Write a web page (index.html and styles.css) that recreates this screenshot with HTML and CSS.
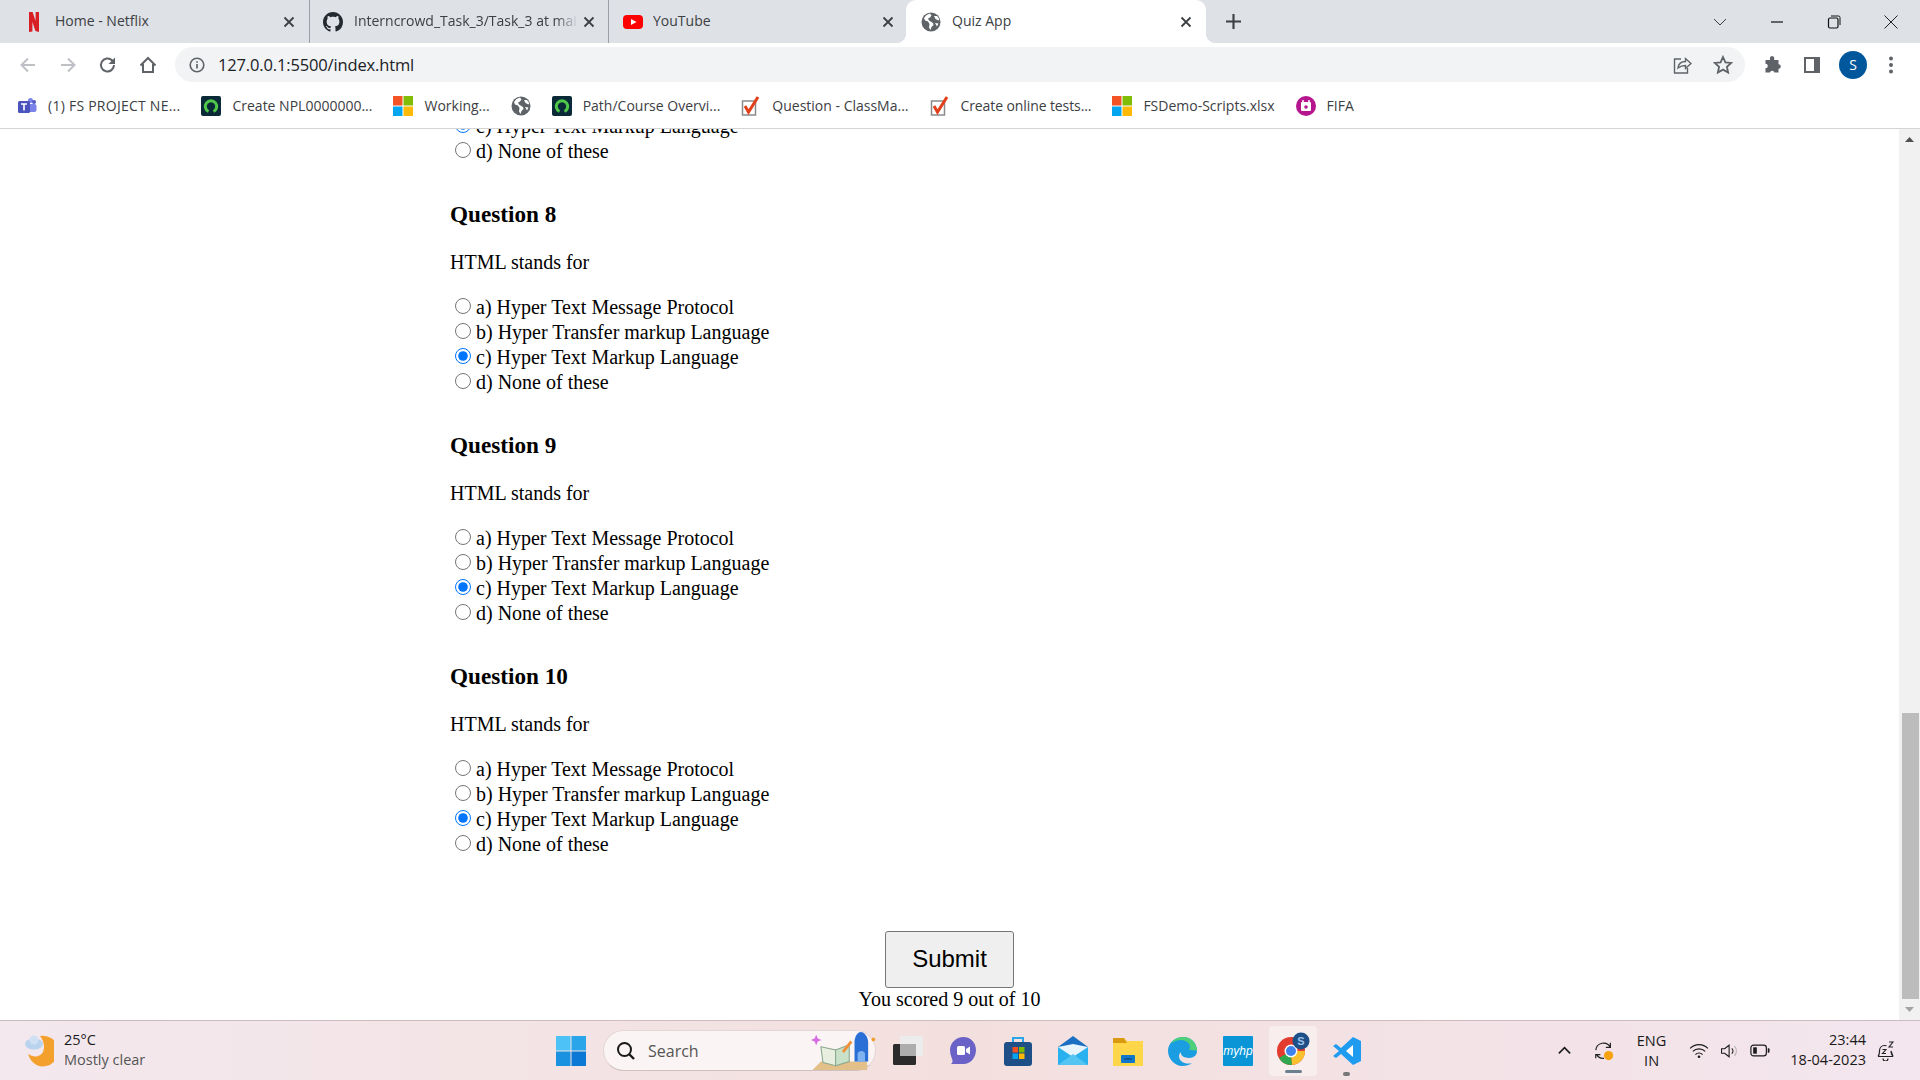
FILE: index.html
```html
<!DOCTYPE html>
<html lang="en">
<head>
  <meta charset="UTF-8" />
  <meta name="viewport" content="width=device-width, initial-scale=1.0" />
  <title>Quiz App</title>
  <link rel="stylesheet" href="styles.css">
</head>
<body>
  <svg class="defs" width="0" height="0">
    <symbol id="globe" viewBox="0 0 20 20">
      <circle cx="10" cy="10" r="9.5" fill="#5f6368"/>
      <path d="M9 1.500 5.500 3 3 6l1 2.500 3 1 1.500 2.500-.5 3.500 1.500 2.500 1-3 2-2-.5-2L8 8.500 7 6.500l2-1 1.500-2zM13 4l1.500 3 3 1.500.8-1.500L16 4zM14 11l2 3.500 1.500-3z" fill="#fff"/>
    </symbol>
    <symbol id="ms" viewBox="0 0 20 20">
      <rect width="9.500" height="9.500" fill="#f35325"/>
      <rect x="10.500" width="9.500" height="9.500" fill="#81bc06"/>
      <rect y="10.500" width="9.500" height="9.500" fill="#05a6f0"/>
      <rect x="10.500" y="10.500" width="9.500" height="9.500" fill="#ffba08"/>
    </symbol>
    <symbol id="ring" viewBox="0 0 20 20">
      <rect width="20" height="20" rx="2" fill="#0b2a38"/>
      <path d="M7.500 15.500a5.700 5.700 0 1 1 5 0" fill="none" stroke="#4fc748" stroke-width="3"/>
    </symbol>
    <symbol id="check" viewBox="0 0 20 20">
      <rect x="1.500" y="5" width="13" height="14" fill="#fff" stroke="#8a8a8a" stroke-width="1.500"/>
      <path d="M4 10l3.500 6L17 1" fill="none" stroke="#e2401b" stroke-width="3"/>
    </symbol>
    <symbol id="close" viewBox="0 0 12 12">
      <path d="M1.500 1.500l9 9m0-9l-9 9" stroke="#3c4043" stroke-width="1.800" fill="none"/>
    </symbol>
  </svg>

  <header class="chrome">
    <div class="tabstrip">
      <div class="tab tab-home">
        <svg class="favicon" viewBox="0 0 20 20"><path d="M5 0h3.600l3 9V0H15v20l-3.600-1L8.400 10v9.500L5 20z" fill="#d81f26"/></svg>
        <span class="tab-title">Home - Netflix</span>
        <svg class="tab-close"><use href="#close"/></svg>
      </div>
      <div class="tab tab-repo">
        <svg class="favicon" viewBox="0 0 16 16"><path fill="#24292f" d="M8 0C3.580 0 0 3.580 0 8c0 3.540 2.290 6.530 5.470 7.590.4.070.55-.17.55-.38 0-.19-.01-.82-.01-1.490-2.010.37-2.530-.49-2.690-.94-.09-.23-.48-.94-.82-1.130-.28-.15-.68-.52-.01-.53.63-.01 1.080.58 1.230.82.72 1.210 1.870.87 2.330.66.07-.52.28-.87.51-1.070-1.780-.2-3.640-.89-3.640-3.950 0-.87.31-1.590.82-2.150-.08-.2-.36-1.020.08-2.120 0 0 .67-.21 2.200.82.64-.18 1.320-.27 2-.27.68 0 1.360.09 2 .27 1.530-1.040 2.200-.82 2.200-.82.44 1.100.16 1.920.08 2.120.51.56.82 1.270.82 2.150 0 3.070-1.870 3.750-3.650 3.950.29.25.54.73.54 1.480 0 1.070-.01 1.930-.01 2.200 0 .21.15.46.55.38A8.013 8.013 0 0016 8c0-4.420-3.580-8-8-8z"/></svg>
        <span class="tab-title tab-title-fade">Interncrowd_Task_3/Task_3 at main</span>
        <svg class="tab-close"><use href="#close"/></svg>
      </div>
      <div class="tab tab-last">
        <svg class="favicon" viewBox="0 0 20 20"><rect y="3" width="20" height="14" rx="4" fill="#f00"/><path d="M8 7l5.500 3L8 13z" fill="#fff"/></svg>
        <span class="tab-title">YouTube</span>
        <svg class="tab-close"><use href="#close"/></svg>
      </div>
      <div class="tab tab-active">
        <svg class="favicon"><use href="#globe"/></svg>
        <span class="tab-title">Quiz App</span>
        <svg class="tab-close"><use href="#close"/></svg>
      </div>
      <svg class="new-tab" viewBox="0 0 14 14"><path d="M7 0v14M0 7h14" stroke="#3c4043" stroke-width="2"/></svg>
      <div class="window-controls">
        <svg class="win-btn" viewBox="0 0 14 14"><path d="M1 4l6 6 6-6" fill="none" stroke="#3c4043"/></svg>
        <svg class="win-btn" viewBox="0 0 14 14"><path d="M1 7h12" stroke="#111" stroke-width="1.200"/></svg>
        <svg class="win-btn" viewBox="0 0 14 14"><rect x="1.500" y="3" width="9.500" height="10" rx="1.500" fill="none" stroke="#111" stroke-width="1.200"/><path d="M4 1h7.500a1.500 1.500 0 0 1 1.500 1.500V10" fill="none" stroke="#111"/></svg>
        <svg class="win-btn" viewBox="0 0 14 14"><path d="M.5.500l13 13m0-13l-13 13" stroke="#222" stroke-width="1"/></svg>
      </div>
    </div>

    <div class="toolbar">
      <svg class="tool" viewBox="0 0 20 20"><path d="M17 10H4m6-6.500L3.500 10l6.500 6.500" fill="none" stroke="#bdc1c6" stroke-width="2"/></svg>
      <svg class="tool" viewBox="0 0 20 20"><path d="M3 10h13m-6-6.500l6.500 6.500-6.500 6.500" fill="none" stroke="#bdc1c6" stroke-width="2"/></svg>
      <svg class="tool" viewBox="0 0 20 20"><path d="M16 10a6.500 6.500 0 1 1-2-4.700L16 7.500" fill="none" stroke="#5f6368" stroke-width="2"/><path d="M17 2.500V9h-6.500z" fill="#5f6368"/></svg>
      <svg class="tool" viewBox="0 0 20 20"><path d="M2.500 10.500 10 3l7.500 7.500M5 9v8h10V9" fill="none" stroke="#5f6368" stroke-width="2"/></svg>
      <div class="omnibox">
        <svg class="omni-info" viewBox="0 0 16 16"><circle cx="8" cy="8" r="6.800" fill="none" stroke="#5f6368" stroke-width="1.600"/><path d="M8 7v4.500M8 4.300v1.500" stroke="#5f6368" stroke-width="1.700"/></svg>
        <span class="omni-url">127.0.0.1:5500/index.html</span>
        <svg class="omni-icon" viewBox="0 0 20 20"><path d="M9 4H2.500v14h13v-5" fill="none" stroke="#5f6368" stroke-width="1.400"/><path d="M6 13c.5-4 3.500-6.500 7.500-6.500V3.500L19 8.500l-5.500 5v-3C10 10.500 8 11.500 6 13z" fill="none" stroke="#5f6368" stroke-width="1.400"/></svg>
        <svg class="omni-icon" viewBox="0 0 20 20"><path d="M10 2l2.400 5.300 5.800.6-4.300 3.900 1.200 5.700-5.100-2.900-5.100 2.900 1.200-5.700L1.800 7.900l5.800-.6z" fill="none" stroke="#5f6368" stroke-width="1.800"/></svg>
      </div>
      <svg class="tool" viewBox="0 0 20 20"><path d="M8 2.500a2.200 2.200 0 0 1 4.200 0V5h4.300v4.200a2.300 2.300 0 1 1 0 4.600v3.700h-4a2.400 2.400 0 0 0-4.600 0H3.500v-4.200a2.300 2.300 0 1 0 0-4.600V5H8z" fill="#5f6368"/></svg>
      <svg class="tool" viewBox="0 0 20 20"><rect x="2" y="2" width="16" height="16" fill="#5f6368"/><rect x="4" y="4" width="8" height="12" fill="#fff"/></svg>
      <span class="avatar">S</span>
      <svg class="tool tool-dots" viewBox="0 0 20 20"><circle cx="10" cy="3.500" r="2" fill="#5f6368"/><circle cx="10" cy="10" r="2" fill="#5f6368"/><circle cx="10" cy="16.500" r="2" fill="#5f6368"/></svg>
    </div>

    <nav class="bookmarks">
      <a class="bookmark bookmark-wide">
        <svg class="bm-icon" viewBox="0 0 20 20"><circle cx="13.500" cy="4.500" r="2.500" fill="#7b83eb"/><circle cx="17" cy="6" r="2" fill="#5059c9"/><rect x="11" y="8" width="8.500" height="8" rx="2" fill="#7b83eb"/><rect x="1" y="5" width="12" height="12" rx="1.500" fill="#4b53bc"/><path d="M4 8h6M7 8v6.500" stroke="#fff" stroke-width="1.600"/></svg>
        (1) FS PROJECT NE...
      </a>
      <a class="bookmark"><svg class="bm-icon"><use href="#ring"/></svg>Create NPL0000000...</a>
      <a class="bookmark"><svg class="bm-icon"><use href="#ms"/></svg>Working...</a>
      <a class="bookmark"><svg class="bm-icon bm-icon-only"><use href="#globe"/></svg></a>
      <a class="bookmark"><svg class="bm-icon"><use href="#ring"/></svg>Path/Course Overvi...</a>
      <a class="bookmark"><svg class="bm-icon"><use href="#check"/></svg>Question - ClassMa...</a>
      <a class="bookmark bookmark-tight"><svg class="bm-icon"><use href="#check"/></svg>Create online tests...</a>
      <a class="bookmark"><svg class="bm-icon"><use href="#ms"/></svg>FSDemo-Scripts.xlsx</a>
      <a class="bookmark">
        <svg class="bm-icon" viewBox="0 0 20 20"><circle cx="10" cy="10" r="10" fill="#b5158d"/><rect x="5" y="6" width="10" height="9" rx="1" fill="#fff"/><path d="M7 4v3M13 4v3" stroke="#fff" stroke-width="1.500"/><circle cx="10" cy="11" r="1.800" fill="#b5158d"/></svg>
        FIFA
      </a>
    </nav>
  </header>

  <div class="viewport">
    <main class="page">
      <div class="quiz">
        <div class="options options-clipped">
          <label class="option"><input type="radio" name="q7" checked>c) Hyper Text Markup Language</label>
          <label class="option"><input type="radio" name="q7">d) None of these</label>
        </div>

        <section class="question">
          <h3>Question 8</h3>
          <p>HTML stands for</p>
          <div class="options">
            <label class="option"><input type="radio" name="q8">a) Hyper Text Message Protocol</label>
            <label class="option"><input type="radio" name="q8">b) Hyper Transfer markup Language</label>
            <label class="option"><input type="radio" name="q8" checked>c) Hyper Text Markup Language</label>
            <label class="option"><input type="radio" name="q8">d) None of these</label>
          </div>
        </section>

        <section class="question">
          <h3>Question 9</h3>
          <p>HTML stands for</p>
          <div class="options">
            <label class="option"><input type="radio" name="q9">a) Hyper Text Message Protocol</label>
            <label class="option"><input type="radio" name="q9">b) Hyper Transfer markup Language</label>
            <label class="option"><input type="radio" name="q9" checked>c) Hyper Text Markup Language</label>
            <label class="option"><input type="radio" name="q9">d) None of these</label>
          </div>
        </section>

        <section class="question">
          <h3>Question 10</h3>
          <p>HTML stands for</p>
          <div class="options">
            <label class="option"><input type="radio" name="q10">a) Hyper Text Message Protocol</label>
            <label class="option"><input type="radio" name="q10">b) Hyper Transfer markup Language</label>
            <label class="option"><input type="radio" name="q10" checked>c) Hyper Text Markup Language</label>
            <label class="option"><input type="radio" name="q10">d) None of these</label>
          </div>
        </section>
      </div>

      <div class="result">
        <button class="submit" type="button">Submit</button>
        <div class="score">You scored 9 out of 10</div>
      </div>
    </main>

    <div class="scrollbar">
      <svg class="scroll-arrow" viewBox="0 0 21 21"><path d="M6 13l4.500-5 4.500 5z" fill="#505050"/></svg>
      <div class="scroll-track"><div class="scroll-thumb"></div></div>
      <svg class="scroll-arrow" viewBox="0 0 21 21"><path d="M6 8l4.500 5 4.500-5z" fill="#a3a3a3"/></svg>
    </div>
  </div>

  <footer class="taskbar">
    <div class="weather">
      <svg class="weather-icon" viewBox="0 0 30 34">
        <path d="M16 2a15 15 0 0 1 6 30C14 34 7 29 4 20c6 4 12 3 15-2 2-5 1-11-3-16z" fill="#f3a02c"/>
        <ellipse cx="10" cy="10" rx="9" ry="5.500" fill="#b9d3ee"/>
        <circle cx="10" cy="6" r="4.500" fill="#cfe0f2"/>
      </svg>
      <div class="weather-text">
        <div class="weather-temp">25°C</div>
        <div class="weather-desc">Mostly clear</div>
      </div>
    </div>

    <div class="task-center">
      <svg class="task-icon start-icon" viewBox="0 0 30 30">
        <rect width="14.500" height="14.500" fill="#4cc2f7"/><rect x="15.500" width="14.500" height="14.500" fill="#2aa5ea"/>
        <rect y="15.500" width="14.500" height="14.500" fill="#1a92e0"/><rect x="15.500" y="15.500" width="14.500" height="14.500" fill="#0a78d4"/>
      </svg>
      <div class="search-box">
        <svg class="search-glass" viewBox="0 0 20 20"><circle cx="8.500" cy="8.500" r="6.500" fill="none" stroke="#1a1a1a" stroke-width="2"/><path d="M13 13l5 5" stroke="#1a1a1a" stroke-width="2.400"/></svg>
        <span class="search-text">Search</span>
        <svg class="search-art" viewBox="0 0 64 40">
          <path d="M2 38l8-8h44v8z" fill="#e3bf8a"/>
          <path d="M10 16l14 3 0 15-12-3z" fill="#e9efe0" stroke="#8aa88e"/>
          <path d="M24 19l13-5v16l-13 4z" fill="#c9e0c9" stroke="#8aa88e"/>
          <path d="M30 20l8-10 2 2-8 10z" fill="#f0913a"/>
          <path d="M42 30V12c0-6 3-10 6-10s7 4 7 10v18z" fill="#2a6fd6"/>
          <path d="M45 30v-8a4 4 0 0 1 7 0v8z" fill="#7fb2f0"/>
          <path d="M4 8l1.500-3.500L7 8l3.500 1.500L7 11l-1.500 3.500L4 11 .5 9.500z" fill="#d66ae0"/>
          <circle cx="60" cy="9" r="1.800" fill="#f0a030"/>
        </svg>
      </div>
      <svg class="task-icon" viewBox="0 0 30 30"><rect x="0" y="8" width="23" height="21" rx="1.500" fill="#2b2b2b"/><rect x="7" y="0" width="23" height="20" rx="1.500" fill="#ececec"/><rect x="7" y="8" width="16" height="12" fill="#adadad"/></svg>
      <svg class="task-icon" viewBox="0 0 30 30"><path d="M15.500 1C23 1 28 7 28 14s-5 14-12.500 14H3c2.500-2 1.500-4 .5-6.500C2.500 19 2 16.500 2 14 2 7 8 1 15.500 1z" fill="#6a62c7"/><rect x="9" y="10" width="8" height="9" rx="1.500" fill="#fff"/><path d="M18 13l4-2.500v8L18 16z" fill="#fff"/></svg>
      <svg class="task-icon" viewBox="0 0 30 30"><path d="M10 6V2h10v4" fill="none" stroke="#2aa5ea" stroke-width="2"/><rect x="1" y="6" width="28" height="24" rx="3" fill="#1e4f86"/><rect x="9.500" y="11" width="5.500" height="5.500" fill="#f25022"/><rect x="16" y="11" width="5.500" height="5.500" fill="#7fba00"/><rect x="9.500" y="17.500" width="5.500" height="5.500" fill="#00a4ef"/><rect x="16" y="17.500" width="5.500" height="5.500" fill="#ffb900"/></svg>
      <svg class="task-icon" viewBox="0 0 30 30"><path d="M0 11L15 0l15 11v18H0z" fill="#1b6fc2"/><path d="M0 11h30v18H0z" fill="#29b0ef"/><path d="M0 11l15 10 15-10-15-3z" fill="#e7f4fb"/><path d="M0 29l15-11 15 11z" fill="#54c4f2"/></svg>
      <svg class="task-icon" viewBox="0 0 30 30"><path d="M0 2h11l3 3h16v25H0z" fill="#ffd64a"/><path d="M0 2h11l3 5H0z" fill="#d99a12"/><rect x="8" y="19" width="14" height="8" rx="1" fill="#1177c9"/><path d="M11.500 23h7" stroke="#0a4d8c" stroke-width="1.500"/></svg>
      <svg class="task-icon" viewBox="0 0 30 30"><path d="M29 15C29 7 23 1 15 1 7 1 0 7 0 15c0 8 7 15 14 15 4 0 8-1 10-3-6 2-13-1-13-7 0-2 1-3 2-4-1 3 3 6 8 6 5 0 8-3 8-7z" fill="#1b9de2"/><path d="M29 15c0-8-6-14-14-14C10 1 5 3.500 3 7.500 6 5 10 4 13 4c6 0 9 4 9 7 0 1-.5 2-1 2.500 2 1.500 8 .5 8 1.500z" fill="#4ed07a"/></svg>
      <svg class="task-icon" viewBox="0 0 30 30"><rect width="30" height="30" rx="1" fill="#0a96d6"/><text x="15" y="19" class="myhp-text" text-anchor="middle">myhp</text></svg>
      <div class="task-active">
        <svg class="task-icon" viewBox="0 0 34 34">
          <circle cx="15" cy="19" r="14" fill="#e33b2e"/>
          <path d="M15 19L3 26a14 14 0 0 0 13 7z" fill="#2fa84f"/>
          <path d="M15 19l1 14a14 14 0 0 0 13-14z" fill="#fbc02d"/>
          <circle cx="15" cy="19" r="6.500" fill="#fff"/><circle cx="15" cy="19" r="5" fill="#3f83ee"/>
          <circle cx="25" cy="9" r="8.500" fill="#1e4f86"/>
          <text x="25" y="13" class="badge-text" text-anchor="middle">S</text>
        </svg>
        <span class="run-dash"></span>
      </div>
      <div class="task-slot">
        <svg class="task-icon" viewBox="0 0 30 30"><path d="M21 1l8 4v20l-8 4L9 18l-5 4-3-2 6-5-6-5 3-2 5 4z" fill="#1f9cf0"/><path d="M21 9l-7 6 7 6z" fill="#fff"/></svg>
        <span class="run-dot"></span>
      </div>
    </div>

    <div class="tray">
      <svg class="tray-icon tray-chevron" viewBox="0 0 16 16"><path d="M2 11l6-6 6 6" fill="none" stroke="#1a1a1a" stroke-width="1.700"/></svg>
      <svg class="tray-icon tray-sync" viewBox="0 0 24 24"><path d="M3 11a8.500 8.500 0 0 1 16-3M19 3v5h-5M3 20v-4h5M4 16a8 8 0 0 0 8 4" fill="none" stroke="#222" stroke-width="1.300"/><circle cx="17" cy="17" r="5" fill="#f7a20e"/></svg>
      <div class="tray-lang"><div>ENG</div><div>IN</div></div>
      <svg class="tray-icon tray-wifi" viewBox="0 0 22 18"><path d="M1 6a14 14 0 0 1 20 0M4 9.500a10 10 0 0 1 14 0M7 13a5.500 5.500 0 0 1 8 0" fill="none" stroke="#1a1a1a" stroke-width="1.300"/><circle cx="11" cy="15.500" r="1.500" fill="#1a1a1a"/></svg>
      <svg class="tray-icon tray-sound" viewBox="0 0 22 18"><path d="M1.500 6.500h3.500L10 2.500v13l-5-4H1.500z" fill="none" stroke="#1a1a1a" stroke-width="1.200"/><path d="M13 6a4 4 0 0 1 0 6" fill="none" stroke="#1a1a1a" stroke-width="1.200"/><path d="M16 3.500a8 8 0 0 1 0 11" fill="none" stroke="#b5b0b0" stroke-width="1.200"/></svg>
      <svg class="tray-icon tray-battery" viewBox="0 0 22 14"><rect x="1" y="1" width="17" height="12" rx="3" fill="none" stroke="#1a1a1a" stroke-width="1.300"/><rect x="3.500" y="3.500" width="4" height="7" fill="#1a1a1a"/><path d="M19.500 4.500h1a1 1 0 0 1 1 1v3a1 1 0 0 1-1 1h-1z" fill="#1a1a1a"/></svg>
      <div class="tray-clock"><div>23:44</div><div>18-04-2023</div></div>
      <svg class="tray-icon tray-bell" viewBox="0 0 20 20"><path d="M2 15.500c1.500-1.500 1.500-3 1.500-5.500 0-3 2-5.500 5-5.500 1.500 0 2 .3 2 .3M15 10c0 2.500.5 4 2 5.500zM2 15.500h15M7 17.500a2.500 2.500 0 0 0 5 0" fill="none" stroke="#222" stroke-width="1.200"/><path d="M6.500 8.500h3.500l-3.500 4H10M13 1h4l-4 5h4" fill="none" stroke="#222" stroke-width="1.100"/></svg>
    </div>
  </footer>
</body>
</html>
```

FILE: styles.css
```css
* { box-sizing: border-box; }
html, body { width: 100%; height: 100%; margin: 0; overflow: hidden; }
body {
  display: flex; flex-direction: column;
  background: #fff;
  font-family: "Open Sans", "Noto Sans", sans-serif;
  color: #202124;
}
.defs { position: absolute; }

/* browser top */
.chrome { flex: none; }
.tabstrip {
  height: 43px; display: flex; align-items: stretch;
  background: #dee1e6; padding-left: 10px;
}
.tab {
  position: relative; display: flex; align-items: center;
  font-size: 14px;
  border-right: 1px solid #9aa0a6;
  background-clip: content-box;
}
.tab-home { width: 300px; padding: 0 14px; }
.tab-repo { width: 299px; padding: 0 13px; }
.tab-last { width: 297px; padding: 0 12px 0 14px; border-right: none; }
.tab-last .favicon { margin-right: 10px; }
.tab-active {
  width: 300px; background: #fff; border-right: none;
  border-radius: 10px 10px 0 0;
  padding: 0 14px 0 15px;
}
.tab-active::before, .tab-active::after {
  content: ""; position: absolute; bottom: 0; width: 10px; height: 10px;
}
.tab-active::before { left: -10px; background: radial-gradient(circle at 0 0, transparent 10px, #fff 10.5px); }
.tab-active::after { right: -10px; background: radial-gradient(circle at 100% 0, transparent 10px, #fff 10.5px); }
.favicon { width: 20px; height: 20px; flex: none; margin-right: 11px; }
.tab-title { flex: 1; overflow: hidden; white-space: nowrap; color: #3c4043; padding-bottom: 2px; }
.tab-title-fade { -webkit-mask-image: linear-gradient(to right, #000 88%, transparent 98%); mask-image: linear-gradient(to right, #000 88%, transparent 98%); }
.tab-close { width: 12px; height: 12px; flex: none; }
.new-tab { width: 15px; height: 15px; align-self: center; margin-left: 20px; }
.window-controls { margin-left: auto; display: flex; align-items: center; padding-right: 22px; gap: 43px; }
.win-btn { width: 14px; height: 14px; }

.toolbar {
  height: 43px; display: flex; align-items: center; padding: 0 18px;
  background: #fff;
}
.tool { width: 20px; height: 20px; flex: none; margin-right: 20px; }
.omnibox {
  flex: none; width: 1570px; height: 35px; border-radius: 18px;
  display: flex; align-items: center;
  margin-left: -3px; margin-right: 17px;
  background: #f1f3f4; padding: 0 12px 0 14px;
}
.omni-info { width: 16px; height: 16px; flex: none; margin-right: 13px; }
.omni-url { font-size: 16.5px; letter-spacing: -0.15px; color: #202124; flex: 1; white-space: nowrap; }
.omni-icon { width: 20px; height: 20px; flex: none; margin-left: 21px; }
.avatar {
  width: 28px; height: 28px; border-radius: 50%; flex: none;
  background: #01579b; color: #fff; font-size: 14px;
  display: flex; align-items: center; justify-content: center;
  margin-right: 14px; margin-left: -3px;
}
.tool-dots { margin-right: 0; }

.bookmarks {
  height: 43px; display: flex; align-items: center; gap: 21px;
  padding: 0 0 3px 17px; border-bottom: 1px solid #d4d4d4;
  font-size: 14px; color: #3c4043;
}
.bookmark { display: flex; align-items: center; white-space: nowrap; }
.bookmark-wide { letter-spacing: 0.25px; }
.bookmark-tight { letter-spacing: -0.1px; }
.bm-icon { width: 20px; height: 20px; flex: none; margin-right: 11px; }
.bm-icon-only { margin-right: 0; }

/* page */
.viewport { flex: 1; min-height: 0; display: flex; }
.page {
  flex: 1; min-width: 0; overflow: hidden;
  font-family: "Liberation Serif", "Times New Roman", serif;
  font-size: 20px; color: #000;
}
.quiz { padding-left: 450px; }
.options { display: flex; flex-direction: column; }
.options-clipped { margin-top: -15px; }
.option { display: block; height: 25px; line-height: 25px; white-space: nowrap; }
.option input { width: 16px; height: 16px; margin: 0 5px 1px 5px; }
.question { padding-top: 37px; }
.question h3 { margin: 0; font-size: 23.2px; line-height: 27px; font-weight: bold; }
.question p { margin: 23px 0 21px; line-height: 23px; }
.result { margin-top: 74px; text-align: center; }
.submit {
  width: 129px; height: 57px; display: block; margin: 0 auto; padding: 0 0 2px;
  font-family: "Liberation Sans", Arial, sans-serif; font-size: 24px; color: #000;
  background: #efefef; border: 1.5px solid #767676; border-radius: 3px;
}
.score { line-height: 23px; }

.scrollbar { flex: none; width: 21px; display: flex; flex-direction: column; background: #f1f1f1; }
.scroll-arrow { width: 21px; height: 21px; flex: none; }
.scroll-track { flex: 1; display: flex; flex-direction: column; justify-content: flex-end; }
.scroll-thumb { height: 286px; margin: 0 1px 0 3px; background: #bcbcbc; }

/* windows taskbar */
.taskbar {
  flex: none; height: 60px; display: flex; align-items: center;
  border-top: 1px solid #cdbcbf;
  background: linear-gradient(to right, #f3e8ee, #f3e0de 50%, #f3e2e6 75%, #f3e6ee);
  font-size: 14.5px; color: #1a1a1a;
}
.weather { width: 554px; flex: none; display: flex; align-items: center; padding-left: 24px; }
.weather-icon { width: 30px; height: 34px; margin-right: 10px; }
.weather-text { line-height: 20px; padding-bottom: 2px; }
.weather-desc { color: #555; }
.task-center { display: flex; align-items: center; }
.task-icon { width: 30px; height: 30px; flex: none; display: block; }
.start-icon { margin: 0 17px 0 2px; }
.search-box {
  width: 273px; height: 41px; border-radius: 21px; flex: none;
  display: flex; align-items: center; padding-left: 12px;
  background: #faf4f4; border: 1px solid #e4d6d6; border-bottom-color: #d0c0c0;
  margin-right: 17px; font-size: 16px; color: #555;
}
.search-glass { width: 20px; height: 20px; margin-right: 12px; }
.search-text { flex: 1; }
.search-art { width: 70px; height: 42px; margin-right: -4px; }
.task-center > .task-icon:not(.start-icon) { margin-right: 25px; }
.myhp-text { font: italic 12px "Liberation Sans", sans-serif; fill: #fff; }
.badge-text { font: bold 11px "Liberation Sans", sans-serif; fill: #9cc3ec; }
.task-active {
  width: 48px; height: 50px; margin-left: -9px; flex: none; border-radius: 4px;
  background: #f8eeee; display: flex; flex-direction: column; align-items: center;
  padding-top: 6px; gap: 4px;
}
.task-active .task-icon { width: 34px; height: 34px; }
.run-dash { width: 17px; height: 3.5px; border-radius: 2px; background: #6b7f8f; }
.task-slot { width: 30px; margin-left: 15px; position: relative; }
.run-dot { position: absolute; left: 11px; bottom: -10px; width: 7px; height: 4px; border-radius: 2px; background: #777; }

.tray { margin-left: auto; display: flex; align-items: center; padding-right: 34px; }
.tray-icon { display: block; flex: none; }
.tray-chevron { width: 15px; height: 15px; margin-right: 21.5px; }
.tray-sync { width: 22px; height: 22px; margin-right: 21.5px; }
.tray-lang { text-align: center; line-height: 20px; margin-right: 23px; }
.tray-wifi { width: 20px; height: 16px; margin-right: 11px; }
.tray-sound { width: 20px; height: 16px; margin-right: 10px; }
.tray-battery { width: 20px; height: 13px; margin-right: 20px; }
.tray-clock { text-align: right; line-height: 20px; margin-right: 10px; padding-bottom: 2px; }
.tray-bell { width: 20px; height: 20px; margin-right: -10px; }
```
